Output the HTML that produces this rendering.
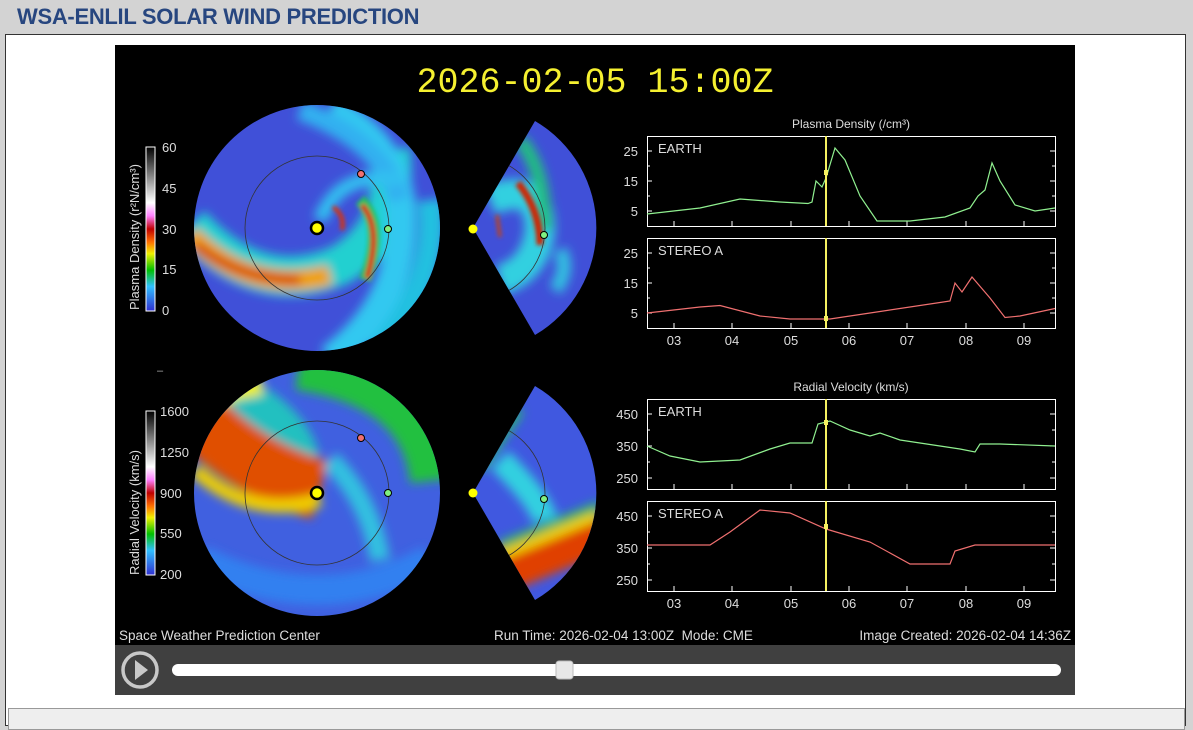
<!DOCTYPE html>
<html><head><meta charset="utf-8"><style>
body{margin:0;width:1193px;height:718px;background:#d3d3d3;overflow:hidden;font-family:"Liberation Sans",sans-serif}
.t{position:absolute;left:17px;top:4px;font-size:22px;font-weight:bold;color:#27467f;letter-spacing:-0.3px}
.box{position:absolute;left:5px;top:34px;width:1179px;height:690px;background:#fff;border:1px solid #333}
.low{position:absolute;left:8px;top:708px;width:1175px;height:20px;border:1px solid #999;background:#eee}
</style></head><body>
<div class="t">WSA-ENLIL SOLAR WIND PREDICTION</div>
<div class="box"></div>
<div class="low"></div>
<svg style="position:absolute;left:0;top:0" width="1193" height="718" font-family="Liberation Sans,sans-serif">
<defs>
<filter id="b" filterUnits="userSpaceOnUse" x="0" y="0" width="1193" height="718"><feGaussianBlur stdDeviation="5"/></filter>
<filter id="b2" filterUnits="userSpaceOnUse" x="0" y="0" width="1193" height="718"><feGaussianBlur stdDeviation="2"/></filter>
<clipPath id="c1"><circle cx="317" cy="228" r="123"/></clipPath>
<clipPath id="w1"><path d="M473 228 L535 121 A124 124 0 0 1 535 335 Z"/></clipPath>
<clipPath id="c2"><circle cx="317" cy="493" r="123"/></clipPath>
<clipPath id="w2"><path d="M473 493 L535 386 A124 124 0 0 1 535 600 Z"/></clipPath>
<linearGradient id="cbd" x1="0" y1="1" x2="0" y2="0"><stop offset="0" stop-color="#3030d0"/><stop offset=".15" stop-color="#30c0ff"/><stop offset=".25" stop-color="#00c000"/><stop offset=".35" stop-color="#f0f000"/><stop offset=".42" stop-color="#ff7000"/><stop offset=".5" stop-color="#c00000"/><stop offset=".58" stop-color="#ff80ff"/><stop offset=".66" stop-color="#fff"/><stop offset="1" stop-color="#000"/></linearGradient>
</defs>
<rect x="115" y="45" width="960" height="600" fill="#000"/>
<text x="595" y="92" fill="#f5f030" font-size="35" font-family="Liberation Mono,monospace" text-anchor="middle">2026-02-05 15:00Z</text>
<!-- density circle -->
<g clip-path="url(#c1)">
<rect x="190" y="100" width="260" height="260" fill="#4050d8"/>
<g filter="url(#b)" fill="none">
<path d="M190 225 Q260 300 340 265 Q400 230 390 150" stroke="#20d0d0" stroke-width="40"/>
<path d="M190 235 Q250 295 330 275" stroke="#f0a000" stroke-width="20"/>
<path d="M195 245 Q240 280 300 280" stroke="#d02000" stroke-width="8"/>
<path d="M330 360 Q410 300 400 200 Q390 140 330 110" stroke="#30c8f0" stroke-width="30"/>
<path d="M380 350 Q440 280 430 200" stroke="#20c0e0" stroke-width="25"/>
<path d="M300 110 Q380 140 400 200" stroke="#30b0f0" stroke-width="20"/>
<path d="M320 220 Q340 170 400 180" stroke="#30c0f0" stroke-width="14"/>
</g>
<g filter="url(#b2)" fill="none">
<path d="M360 200 Q385 225 365 280" stroke="#20c060" stroke-width="12"/>
<path d="M362 205 Q382 228 367 278" stroke="#e00000" stroke-width="5"/>
<path d="M333 207 Q345 215 342 230" stroke="#e03000" stroke-width="4"/>
</g>
<circle cx="317" cy="228" r="72" fill="none" stroke="#333" stroke-width=".8"/>
</g>
<circle cx="317" cy="228" r="6" fill="#ff0" stroke="#000" stroke-width="2.5"/>
<circle cx="361" cy="174" r="3.5" fill="#f07070" stroke="#000"/>
<circle cx="388" cy="229" r="3.5" fill="#80f080" stroke="#000"/>
<!-- density wedge -->
<g clip-path="url(#w1)">
<rect x="470" y="115" width="135" height="225" fill="#4050d8"/>
<g filter="url(#b)" fill="none">
<path d="M490 200 Q540 180 540 230 Q535 270 500 280" stroke="#30d0e0" stroke-width="30"/>
<path d="M520 140 Q545 170 545 230" stroke="#20c080" stroke-width="14"/>
<path d="M560 250 Q570 270 555 290" stroke="#30c0e0" stroke-width="14"/>
</g>
<g filter="url(#b2)" fill="none">
<path d="M518 183 Q540 210 540 245" stroke="#d02000" stroke-width="7"/>
<path d="M497 215 L500 237" stroke="#d04000" stroke-width="3"/>
</g>
<circle cx="473" cy="228" r="72" fill="none" stroke="#333" stroke-width=".8"/>
</g>
<circle cx="473" cy="229" r="4.5" fill="#ff0"/>
<circle cx="544" cy="235" r="3.5" fill="#80f080" stroke="#000"/>
<!-- velocity circle -->
<g clip-path="url(#c2)">
<rect x="190" y="365" width="260" height="260" fill="#4060e0"/>
<g filter="url(#b)" fill="none">
<path d="M300 360 Q430 380 440 480" stroke="#20c040" stroke-width="60"/>
<path d="M230 390 Q290 420 300 460" stroke="#20c0c0" stroke-width="40"/>
<path d="M200 420 Q250 470 320 490" stroke="#e05000" stroke-width="60"/>
<path d="M195 470 Q250 520 320 500" stroke="#f0d000" stroke-width="14"/>
<path d="M190 400 Q220 380 260 375" stroke="#f0f000" stroke-width="40"/>
<path d="M330 460 Q370 500 380 560" stroke="#30c0e0" stroke-width="20"/>
<path d="M200 560 Q320 620 430 560" stroke="#3080f0" stroke-width="30"/>
</g>
<circle cx="317" cy="493" r="72" fill="none" stroke="#333" stroke-width=".8"/>
</g>
<circle cx="317" cy="493" r="6" fill="#ff0" stroke="#000" stroke-width="2.5"/>
<circle cx="361" cy="438" r="3.5" fill="#f07070" stroke="#000"/>
<circle cx="388" cy="493" r="3.5" fill="#80f080" stroke="#000"/>
<!-- velocity wedge -->
<g clip-path="url(#w2)">
<rect x="470" y="380" width="135" height="225" fill="#4058e0"/>
<g filter="url(#b)" fill="none">
<path d="M500 460 Q540 500 545 520" stroke="#30d0e0" stroke-width="25"/>
<path d="M480 580 L600 530" stroke="#e04000" stroke-width="45"/>
<path d="M490 560 L600 515" stroke="#f0e000" stroke-width="8"/>
<path d="M500 545 L600 505" stroke="#20c060" stroke-width="8"/>
<path d="M480 470 L520 410" stroke="#20c060" stroke-width="8"/>
</g>
<circle cx="473" cy="493" r="72" fill="none" stroke="#333" stroke-width=".8"/>
</g>
<circle cx="473" cy="493" r="4.5" fill="#ff0"/>
<circle cx="544" cy="499" r="3.5" fill="#80f080" stroke="#000"/>
<!-- colorbars -->
<rect x="146" y="147" width="9" height="164" fill="url(#cbd)" stroke="#fff"/>
<rect x="146" y="411" width="9" height="164" fill="url(#cbd)" stroke="#fff"/>
<g fill="#ddd" font-size="13">
<text x="162" y="152">60</text><text x="162" y="193">45</text><text x="162" y="234">30</text><text x="162" y="274">15</text><text x="162" y="315">0</text>
<text x="160" y="416">1600</text><text x="160" y="457">1250</text><text x="160" y="498">900</text><text x="160" y="538">550</text><text x="160" y="579">200</text>
<text transform="translate(139,310) rotate(-90)" font-size="13">Plasma Density (r²N/cm³)</text>
<text transform="translate(139,575) rotate(-90)" font-size="13">Radial Velocity (km/s)</text>
</g>
<text x="157" y="374" fill="#aaa" font-size="11">–</text>
<!-- plots -->
<g fill="none" stroke="#fff" stroke-width="1">
<rect x="647.5" y="136.5" width="408" height="90"/>
<rect x="647.5" y="238.5" width="408" height="90"/>
<rect x="647.5" y="399.5" width="408" height="90"/>
<rect x="647.5" y="501.5" width="408" height="90"/>
</g>
<g stroke="#fff" stroke-width="1">
<path d="M674 226v-5M732 226v-5M791 226v-5M849 226v-5M907 226v-5M966 226v-5M1024 226v-5 M674 328v-5M732 328v-5M791 328v-5M849 328v-5M907 328v-5M966 328v-5M1024 328v-5 M674 489v-5M732 489v-5M791 489v-5M849 489v-5M907 489v-5M966 489v-5M1024 489v-5 M674 591v-5M732 591v-5M791 591v-5M849 591v-5M907 591v-5M966 591v-5M1024 591v-5"/>
<path d="M647 151h5M647 166h3M647 181h5M647 196h3M647 211h5M1055 151h-5M1055 166h-3M1055 181h-5M1055 196h-3M1055 211h-5"/>
<path d="M647 253h5M647 268h3M647 283h5M647 298h3M647 313h5M1055 253h-5M1055 268h-3M1055 283h-5M1055 298h-3M1055 313h-5"/>
<path d="M647 414h5M647 430h3M647 446h5M647 462h3M647 478h5M1055 414h-5M1055 430h-3M1055 446h-5M1055 462h-3M1055 478h-5"/>
<path d="M647 516h5M647 532h3M647 548h5M647 564h3M647 580h5M1055 516h-5M1055 532h-3M1055 548h-5M1055 564h-3M1055 580h-5"/>
</g>
<g fill="#ddd" font-size="13">
<text x="851" y="128" text-anchor="middle" font-size="12">Plasma Density (/cm³)</text>
<text x="851" y="391" text-anchor="middle" font-size="12">Radial Velocity (km/s)</text>
<text x="658" y="153">EARTH</text><text x="658" y="255">STEREO A</text>
<text x="658" y="416">EARTH</text><text x="658" y="518">STEREO A</text>
<g text-anchor="end"><text x="638" y="156">25</text><text x="638" y="186">15</text><text x="638" y="216">5</text>
<text x="638" y="258">25</text><text x="638" y="288">15</text><text x="638" y="318">5</text>
<text x="638" y="419">450</text><text x="638" y="451">350</text><text x="638" y="483">250</text>
<text x="638" y="521">450</text><text x="638" y="553">350</text><text x="638" y="585">250</text></g>
<g text-anchor="middle"><text x="674" y="345">03</text><text x="732" y="345">04</text><text x="791" y="345">05</text><text x="849" y="345">06</text><text x="907" y="345">07</text><text x="966" y="345">08</text><text x="1024" y="345">09</text>
<text x="674" y="608">03</text><text x="732" y="608">04</text><text x="791" y="608">05</text><text x="849" y="608">06</text><text x="907" y="608">07</text><text x="966" y="608">08</text><text x="1024" y="608">09</text></g>
</g>
<g fill="none" stroke-width="1.2">
<polyline stroke="#90f090" points="647,214 700,208 740,199 780,202 808,203.5 812,202 816,181 822,187 826,178 835,148 845,160 860,196 877,221 910,221 945,217 970,208 978,196 985,190 992,163 1000,181 1015,205 1035,211 1055,208"/>
<polyline stroke="#f07070" points="647,313 700,307 720,305.5 760,316 790,319 830,319 870,313 940,302.5 950,301 955,283 962,292 972,277 990,298 1005,317.5 1020,316 1055,308.5"/>
<polyline stroke="#90f090" points="647,446 670,456 700,462 740,460 770,449 790,443 812,443 818,424 830,421 850,430 870,436 880,433 900,440 960,449 975,452 980,444 1000,444 1055,446"/>
<polyline stroke="#f07070" points="647,545 710,545 730,532 760,510 790,513 826,529 870,542 910,564 950,564 955,551 975,545 1055,545"/>
</g>
<g stroke="#f5f060" stroke-width="2"><path d="M826 136v90M826 238v90M826 399v90M826 501v90"/></g>
<g fill="#f5f060"><rect x="824" y="170" width="4" height="5"/><rect x="824" y="316" width="4" height="5"/><rect x="824" y="420" width="4" height="5"/><rect x="824" y="524" width="4" height="5"/></g>
<g fill="#ddd" font-size="13.5">
<text x="119" y="640">Space Weather Prediction Center</text>
<text x="494" y="640">Run Time: 2026-02-04 13:00Z&#160;&#160;Mode: CME</text>
<text x="1071" y="640" text-anchor="end">Image Created: 2026-02-04 14:36Z</text>
</g>
<rect x="115" y="645" width="960" height="50" fill="#404040"/>
<circle cx="140" cy="670" r="17" fill="none" stroke="#c8c8c8" stroke-width="3.5"/>
<path d="M135 660 L148 670 L135 680 Z" fill="#c8c8c8"/>
<rect x="172" y="664" width="889" height="12" rx="6" fill="#fff"/>
<rect x="556" y="661" width="17" height="18" rx="3" fill="#e8e8e8" stroke="#bbb"/>
</svg>
</body></html>
